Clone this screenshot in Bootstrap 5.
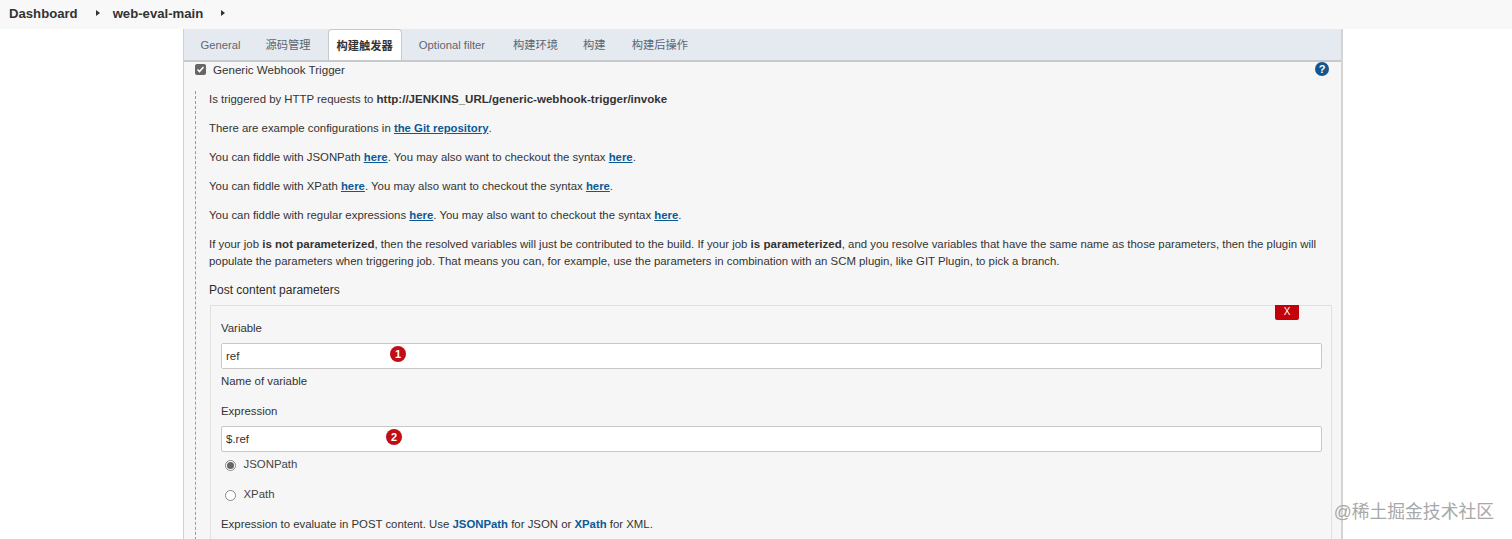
<!DOCTYPE html>
<html lang="zh">
<head>
<meta charset="utf-8">
<title>web-eval-main</title>
<link href="https://cdn.jsdelivr.net/npm/bootstrap@5.3.0/dist/css/bootstrap.min.css" rel="stylesheet">
<style>
html,body{height:539px;overflow:hidden}
body{background:#fff;color:#333;font:11.4px/17px "Liberation Sans","Noto Sans CJK SC",sans-serif}
b{font-size:11.55px}
.dashed a,.helper a{font-size:11.35px}
.crumbs{height:29px;background:#f8f8f8;padding:0 0 3px 9px;font-size:13.15px;font-weight:700;color:#333}
.crumb-arrow{width:0;height:0;border-left:4px solid #333;border-top:3px solid transparent;border-bottom:3px solid transparent;margin:0 13px 0 18px}
.sheet{width:1160px;margin-left:183px;height:510px;background:#f6f6f6;border-left:1px solid #d0d0d0;border-right:2px solid #d4d4d4;position:relative}
.tabbar{height:33px;background:#e4eaf0;border-bottom:2px solid #c6cacd;padding-left:6px}
.tabitem{height:31px;padding:0 10.5px;color:#5c6670;font-size:11.25px;line-height:33px;margin-right:5px}
.tabitem:first-child{margin-right:4px}
.tabitem:nth-child(4){margin-right:7px}
.tabitem:nth-child(5){margin-right:4px}
.tabitem.now{background:#fff;color:#333;font-weight:700;border:1px solid #c6cacd;border-bottom:0;border-radius:4px 4px 0 0;padding:0 8px;height:31px;margin:0 6.5px 0 1.5px;line-height:32px}
.checkrow{height:15px;padding-left:11px;gap:7px;color:#333;font-size:11.6px}
.fakecheck{width:11px;height:11px;border-radius:2px;background:#666;margin-top:-1px}
.help{position:absolute;right:12px;top:33px;width:14px;height:14px;border-radius:50%;background:#14568f;color:#fff;font-size:11px;font-weight:700;line-height:14px;text-align:center}
.dashed{margin:14px 0 0 11px;padding:0 9px 0 13px;border-left:1px dashed #9a9a9a}
.dashed p{margin:0 0 12px}
.dashed a,.helper a{color:#0b5a96;font-weight:700}
.helper a{text-decoration:none}
.dashed p.sectionhead{font-size:12px;color:#2c2c2c}
.rowbox{margin:-6px 0 0 1px;padding:14px 9px 0 10px;border:1px solid #e0e0e0;border-bottom:0;position:relative;height:300px}
.xbtn{position:absolute;right:32px;top:-1px;width:24px;height:15px;border-radius:0 0 2px 2px;background:#c4000a;color:#fff;font-size:10px;line-height:14px;text-align:center}
.fld{display:block;width:100%;height:26px;padding:0 4px;border:1px solid #c8c8c8;border-radius:2px;background:#fff;color:#333;font:11.5px "Liberation Sans",sans-serif}
.fldlabel{margin-bottom:5.5px;font-weight:400;color:#333;display:block}
.fieldwrap{position:relative}
.pin{position:absolute;top:3px;width:16px;height:16px;border-radius:50%;background:#c00d16;color:#fff;font-size:11px;font-weight:700;line-height:16px;text-align:center}
.pin-first{left:169px}
.pin-second{left:165px}
.fieldnote{margin:4px 0 13.5px}
.fieldwrap+.radiorow{margin-top:1px}
.radiorow{height:24px;gap:8px;padding-left:3.5px;margin-bottom:6px;color:#444}
.fakeradio{width:11px;height:11px;border:1px solid #888;border-radius:50%;background:#fff;display:flex;align-items:center;justify-content:center;margin-top:2px}
.fakeradio i{width:7px;height:7px;background:#666;border-radius:50%}
.helper{margin-top:9px}
.watermark{position:absolute;right:18px;top:501px;color:#a8a8a8;font-size:17.8px;line-height:22px;white-space:nowrap}
</style>
</head>
<body>
<nav class="crumbs d-flex align-items-center">
  <span>Dashboard</span>
  <span class="crumb-arrow"></span>
  <span>web-eval-main</span>
  <span class="crumb-arrow"></span>
</nav>
<main class="sheet">
  <div class="tabbar d-flex align-items-end">
    <span class="tabitem">General</span>
    <span class="tabitem">源码管理</span>
    <span class="tabitem now">构建触发器</span>
    <span class="tabitem">Optional filter</span>
    <span class="tabitem">构建环境</span>
    <span class="tabitem">构建</span>
    <span class="tabitem">构建后操作</span>
  </div>
  <span class="help">?</span>
  <div class="checkrow d-flex align-items-center">
    <svg class="fakecheck" viewBox="0 0 11 11"><path d="M2.5 5.5l2 2 4-4.5" fill="none" stroke="#fff" stroke-width="1.6"/></svg>
    <span>Generic Webhook Trigger</span>
  </div>
  <div class="dashed">
    <p>Is triggered by HTTP requests to <b>http://JENKINS_URL/generic-webhook-trigger/invoke</b></p>
    <p>There are example configurations in <a href="#">the Git repository</a>.</p>
    <p>You can fiddle with JSONPath <a href="#">here</a>. You may also want to checkout the syntax <a href="#">here</a>.</p>
    <p>You can fiddle with XPath <a href="#">here</a>. You may also want to checkout the syntax <a href="#">here</a>.</p>
    <p>You can fiddle with regular expressions <a href="#">here</a>. You may also want to checkout the syntax <a href="#">here</a>.</p>
    <p>If your job <b>is not parameterized</b>, then the resolved variables will just be contributed to the build. If your job <b>is parameterized</b>, and you resolve variables that have the same name as those parameters, then the plugin will populate the parameters when triggering job. That means you can, for example, use the parameters in combination with an SCM plugin, like GIT Plugin, to pick a branch.</p>
    <p class="sectionhead">Post content parameters</p>
    <section class="rowbox">
      <span class="xbtn">X</span>
      <label class="fldlabel">Variable</label>
      <div class="fieldwrap">
        <input class="fld" value="ref" aria-label="Variable">
        <span class="pin pin-first">1</span>
      </div>
      <div class="fieldnote">Name of variable</div>
      <label class="fldlabel">Expression</label>
      <div class="fieldwrap">
        <input class="fld" value="$.ref" aria-label="Expression">
        <span class="pin pin-second">2</span>
      </div>
      <div class="radiorow d-flex align-items-center"><span class="fakeradio"><i></i></span><span>JSONPath</span></div>
      <div class="radiorow d-flex align-items-center"><span class="fakeradio"></span><span>XPath</span></div>
      <div class="helper">Expression to evaluate in POST content. Use <a href="#">JSONPath</a> for JSON or <a href="#">XPath</a> for XML.</div>
    </section>
  </div>
</main>
<div class="watermark">@稀土掘金技术社区</div>
<script src="https://cdn.jsdelivr.net/npm/bootstrap@5.3.0/dist/js/bootstrap.bundle.min.js"></script>
</body>
</html>
